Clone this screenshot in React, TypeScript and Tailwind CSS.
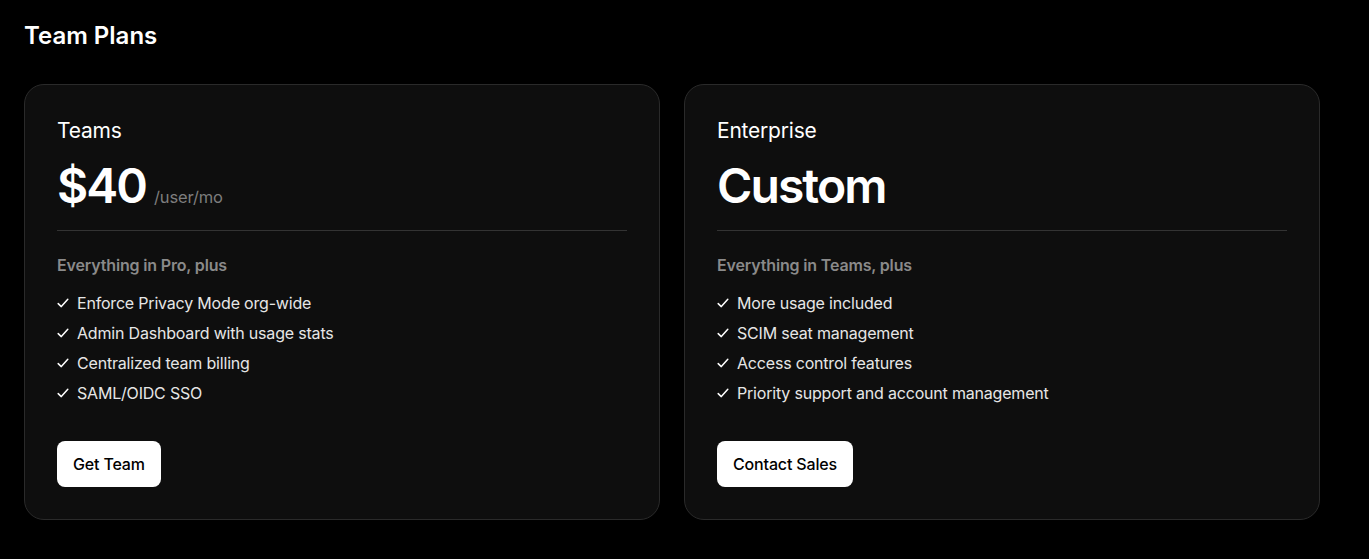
import React from 'react';

type Plan = {
  name: string;
  price: string;
  unit?: string;
  intro: string;
  features: string[];
  cta: string;
};

const PLANS: Plan[] = [
  {
    name: 'Teams',
    price: '$40',
    unit: '/user/mo',
    intro: 'Everything in Pro, plus',
    features: [
      'Enforce Privacy Mode org-wide',
      'Admin Dashboard with usage stats',
      'Centralized team billing',
      'SAML/OIDC SSO',
    ],
    cta: 'Get Team',
  },
  {
    name: 'Enterprise',
    price: 'Custom',
    intro: 'Everything in Teams, plus',
    features: [
      'More usage included',
      'SCIM seat management',
      'Access control features',
      'Priority support and account management',
    ],
    cta: 'Contact Sales',
  },
];

const Check = () => (
  <svg width="12" height="12" viewBox="0 0 12 12" fill="none" className="shrink-0">
    <path d="M1.2 6.6 L4.3 9.6 L10.8 2.2" stroke="white" strokeWidth="1.5" strokeLinecap="round" strokeLinejoin="round" />
  </svg>
);

const PlanCard: React.FC<{ plan: Plan }> = ({ plan }) => (
  <div className="flex flex-col rounded-[20px] border border-[#2a2a2a] bg-[#0e0e0e] px-8 pt-8 pb-8">
    <div className="text-[21px] leading-7 tracking-[-0.01em] text-white">{plan.name}</div>
    <div className="mt-[14px] flex items-baseline gap-2 border-b border-[#333] pb-[17px]">
      <span className="text-[48px] font-semibold leading-[54px] tracking-[-0.04em] text-white">{plan.price}</span>
      {plan.unit && <span className="text-[16.5px] tracking-[-0.01em] text-[#7d7d7d]">{plan.unit}</span>}
    </div>
    <div className="mt-[22px] text-[16px] font-semibold leading-6 tracking-[-0.01em] text-[#8a8a8a]">{plan.intro}</div>
    <ul className="mt-[14px] flex flex-col gap-[6px]">
      {plan.features.map((f) => (
        <li key={f} className="flex items-center gap-[8px] text-[16px] leading-6 tracking-[-0.012em] text-[#e6e6e6]">
          <Check />
          {f}
        </li>
      ))}
    </ul>
    <div className="mt-[36px]">
      <button className="h-[46px] rounded-lg bg-white px-4 text-[16px] font-medium tracking-[-0.01em] text-black">
        {plan.cta}
      </button>
    </div>
  </div>
);

export default function App() {
  return (
    <div
      className="min-h-screen bg-black px-6 pt-[22px] text-white"
      style={{ fontFamily: 'Inter, "Noto Sans", sans-serif' }}
    >
      <h2 className="text-[24px] font-semibold leading-7 text-white">Team Plans</h2>
      <div className="mt-[34px] grid w-[1296px] grid-cols-2 gap-6">
        {PLANS.map((p) => (
          <PlanCard key={p.name} plan={p} />
        ))}
      </div>
    </div>
  );
}
